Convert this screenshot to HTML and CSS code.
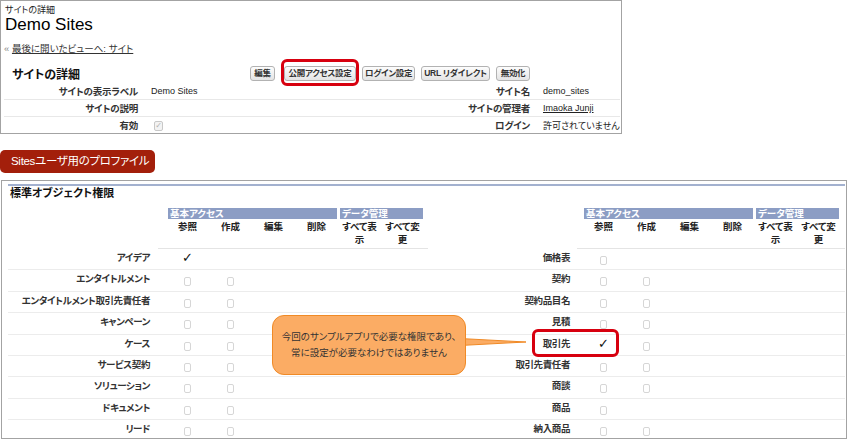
FILE: index.html
```html
<!DOCTYPE html>
<html lang="ja">
<head>
<meta charset="utf-8">
<title>Sites</title>
<link rel="stylesheet" href="styles.css">
</head>
<body>
<div class="page">
  <section class="site-panel">
    <div class="crumb">サイトの詳細</div>
    <div class="site-title">Demo Sites</div>
    <div class="back"><span class="raquo">«</span> <a href="#">最後に開いたビューへ: サイト</a></div>
    <div class="detail-head">
      <h2>サイトの詳細</h2>
      <div class="buttons">
        <span class="btn w-edit">編集</span>
        <span class="btn w-public marked">公開アクセス設定</span>
        <span class="btn w-login">ログイン設定</span>
        <span class="btn w-url">URL リダイレクト</span>
        <span class="btn w-off">無効化</span>
      </div>
    </div>
    <div class="detail">
      <div class="drow"><span class="lbl">サイトの表示ラベル</span><span class="val">Demo Sites</span><span class="lbl">サイト名</span><span class="val">demo_sites</span></div>
      <div class="drow"><span class="lbl">サイトの説明</span><span class="val"></span><span class="lbl">サイトの管理者</span><span class="val"><a href="#">Imaoka Junji</a></span></div>
      <div class="drow"><span class="lbl">有効</span><span class="val"><span class="cb-on">✓</span></span><span class="lbl">ログイン</span><span class="val">許可されていません</span></div>
    </div>
  </section>

  <div class="badge">Sitesユーザ用のプロファイル</div>

  <section class="perm-panel">
    <div class="perm-inner">
      <h3>標準オブジェクト権限</h3>
      <div class="tables">
        <div class="ptable left">
          <div class="prow grp"><span></span><span class="bar basic">基本アクセス</span><span class="bar datam">データ管理</span></div>
          <div class="prow colhead"><span></span><span>参照</span><span>作成</span><span>編集</span><span>削除</span><span>すべて表<br>示</span><span>すべて変<br>更</span></div>
          <div class="prow data"><span class="lbl">アイデア</span><span class="cell tick-cell"><i class="tick">✓</i></span></div>
          <div class="prow data"><span class="lbl">エンタイトルメント</span><span class="cell"><i class="box"></i></span><span class="cell"><i class="box"></i></span></div>
          <div class="prow data"><span class="lbl">エンタイトルメント取引先責任者</span><span class="cell"><i class="box"></i></span><span class="cell"><i class="box"></i></span></div>
          <div class="prow data"><span class="lbl">キャンペーン</span><span class="cell"><i class="box"></i></span><span class="cell"><i class="box"></i></span></div>
          <div class="prow data"><span class="lbl">ケース</span><span class="cell"><i class="box"></i></span><span class="cell"><i class="box"></i></span></div>
          <div class="prow data"><span class="lbl">サービス契約</span><span class="cell"><i class="box"></i></span><span class="cell"><i class="box"></i></span></div>
          <div class="prow data"><span class="lbl">ソリューション</span><span class="cell"><i class="box"></i></span><span class="cell"><i class="box"></i></span></div>
          <div class="prow data"><span class="lbl">ドキュメント</span><span class="cell"><i class="box"></i></span><span class="cell"><i class="box"></i></span></div>
          <div class="prow data"><span class="lbl">リード</span><span class="cell"><i class="box"></i></span><span class="cell"><i class="box"></i></span></div>
        </div>
        <div class="ptable right">
          <div class="prow grp"><span></span><span class="bar basic">基本アクセス</span><span class="bar datam">データ管理</span></div>
          <div class="prow colhead"><span></span><span>参照</span><span>作成</span><span>編集</span><span>削除</span><span>すべて表<br>示</span><span>すべて変<br>更</span></div>
          <div class="prow data"><span class="lbl">価格表</span><span class="cell"><i class="box"></i></span></div>
          <div class="prow data"><span class="lbl">契約</span><span class="cell"><i class="box"></i></span><span class="cell"><i class="box"></i></span></div>
          <div class="prow data"><span class="lbl">契約品目名</span><span class="cell"><i class="box"></i></span><span class="cell"><i class="box"></i></span></div>
          <div class="prow data"><span class="lbl">見積</span><span class="cell"><i class="box"></i></span><span class="cell"><i class="box"></i></span></div>
          <div class="prow data"><span class="lbl">取引先</span><span class="cell tick-cell"><i class="tick">✓</i></span><span class="cell"><i class="box"></i></span></div>
          <div class="prow data"><span class="lbl">取引先責任者</span><span class="cell"><i class="box"></i></span><span class="cell"><i class="box"></i></span></div>
          <div class="prow data"><span class="lbl">商談</span><span class="cell"><i class="box"></i></span><span class="cell"><i class="box"></i></span></div>
          <div class="prow data"><span class="lbl">商品</span><span class="cell"><i class="box"></i></span></div>
          <div class="prow data"><span class="lbl">納入商品</span><span class="cell"><i class="box"></i></span><span class="cell"><i class="box"></i></span></div>
        </div>
      </div>
    </div>
  </section>

  <svg class="pointer" width="70" height="16" viewBox="0 0 70 16"><polygon points="0,4.5 0,11.5 66,8" fill="#fbac64" stroke="#f08a26" stroke-width="1"/></svg>
  <div class="callout"><span>今回のサンプルアプリで必要な権限であり、</span><span>常に設定が必要なわけではありません</span></div>
  <div class="hl"></div>
</div>
</body>
</html>
```

FILE: styles.css
```css
* { box-sizing: border-box; margin: 0; padding: 0; }
body {
  margin: 0;
  background: #fff;
  font-family: "Liberation Sans", "Noto Sans CJK JP", sans-serif;
  font-feature-settings: "palt";
  color: #222;
  font-size: 10px;
}
.page { position: relative; width: 849px; height: 439px; overflow: hidden; }

/* top panel */
.site-panel { width: 622px; border: 1px solid #a3a3a3; padding: 3px 1px 0 3px; }
.crumb { font-size: 9px; line-height: 12px; padding-left: 1px; color: #222; }
.site-title { font-size: 17px; line-height: 18px; padding-left: 1px; color: #000; }
.back { margin-top: 9px; line-height: 12px; font-size: 9.5px; }
.raquo { color: #888; }
.back a { color: #333; text-decoration: underline; }
.detail-head { margin-top: 10px; height: 16px; display: flex; align-items: center; }
.detail-head h2 { font-size: 12px; font-weight: bold; width: 246px; padding-left: 8px; color: #111; }
.buttons { display: flex; gap: 6px; }
.btn {
  height: 15px; line-height: 13px;
  border: 1px solid #b2b2b2; border-radius: 3px;
  background: linear-gradient(#fdfdfd, #e4e4e4);
  font-size: 8.5px; font-weight: bold; text-align: center; color: #333;
  letter-spacing: -0.3px; white-space: nowrap;
}
.w-edit { width: 25px; }
.w-public { width: 72px; margin-left: 3px; position: relative; }
.w-login { width: 53px; }
.w-url { width: 69px; }
.w-off { width: 34px; }
.marked::after {
  content: ""; position: absolute;
  left: -4px; right: -4px; top: -8px; bottom: -6px;
  border: 3px solid #d7000f; border-radius: 6px;
}
.detail { margin-top: 2px; }
.drow {
  display: grid; grid-template-columns: 136px 260px 132px 1fr;
  height: 17px; align-items: center; border-bottom: 1px solid #e8e8e8;
}
.drow:last-child { border-bottom: 0; height: 16px; }
.drow .lbl { text-align: right; padding-right: 2px; font-weight: bold; color: #333; white-space: nowrap; font-size: 9.5px; letter-spacing: -0.2px; }
.drow .val { padding-left: 11px; color: #222; white-space: nowrap; font-size: 9px; }
.drow .val a { color: #222; text-decoration: underline; }
.cb-on {
  display: inline-block; width: 9px; height: 10px; margin: 2px 0 0 3px;
  border: 1px solid #c8c8c8; border-radius: 2px; background: #f3f3f3;
  color: #b0b0b0; font-size: 8px; line-height: 8px; text-align: center;
  font-family: "DejaVu Sans", sans-serif;
}

/* badge */
.badge {
  margin-top: 16px; width: 155px; height: 23px;
  background: #a31f0b; color: #fff;
  font-size: 11.5px; line-height: 23px; padding-left: 11px;
  letter-spacing: -0.3px;
  border-radius: 5px; white-space: nowrap;
}

/* permissions panel */
.perm-panel {
  margin-top: 7px; margin-left: 1px; width: 846px; height: 259px;
  border: 1px solid #a3a3a3; overflow: hidden;
  padding: 3px 1px 0 6px;
}
.perm-inner { border-top: 2px solid #a3b1cf; }
.perm-inner h3 { font-size: 11px; font-weight: bold; line-height: 14px; padding-left: 2px; color: #111; }
.tables { display: flex; margin-top: 8px; }
.ptable.left { width: 475px; --lw: 158px; --lp: 16px; }
.ptable.right { width: 362px; --lw: 99px; --lp: 12px; }
.prow { display: grid; grid-template-columns: var(--lw) repeat(6, 43px) 1fr; }
.grp { height: 11px; position: relative; z-index: 1; }
.bar {
  background: #8c9dc4; color: #fff; font-weight: bold;
  font-family: "Noto Sans CJK JP", sans-serif;
  font-size: 9.5px; line-height: 11px; height: 11px; padding-left: 2px;
  white-space: nowrap; display: flex; align-items: center;
}
.bar.basic { grid-column: span 4; margin: 0 1px 0 2px; }
.bar.datam { grid-column: span 2; margin: 0 1px 0 2px; }
.colhead {
  height: 30px; padding-top: 1px;
  background: linear-gradient(#e4e4e4, #e4e4e4) no-repeat;
  background-size: 270px 1px;
}
.left .colhead { background-position: 150px 100%; }
.right .colhead { background-position: 94px 100%; }
.colhead span { text-align: center; font-weight: bold; font-size: 9.5px; line-height: 13px; color: #222; }
.data { height: 21.4px; border-bottom: 1px solid #ececec; }
.data .lbl {
  text-align: right; padding-right: var(--lp); padding-top: 2px;
  font-weight: bold; font-size: 9.5px; letter-spacing: -0.4px;
  line-height: 14px; color: #333; white-space: nowrap;
}
.cell { display: flex; justify-content: center; padding-top: 7px; }
.box { display: block; width: 7px; height: 9px; border: 1px solid #d6d6d6; border-radius: 2px; background: #fff; }
.tick-cell { padding-top: 2px; }
.tick { font-style: normal; font-size: 13px; line-height: 13px; color: #111; font-family: "DejaVu Sans", sans-serif; }

/* annotations */
.pointer { position: absolute; left: 460px; top: 334px; }
.callout {
  position: absolute; left: 272px; top: 315px; width: 194px; height: 60px;
  background: #fbac64; border: 1.5px solid #f08a26; border-radius: 12px;
  display: flex; flex-direction: column; justify-content: center; align-items: center;
  font-size: 9.5px; line-height: 16px; color: #333; white-space: nowrap;
}
.hl {
  position: absolute; left: 532px; top: 329px; width: 87px; height: 28px;
  border: 3px solid #d7000f; border-radius: 6px;
}
```
